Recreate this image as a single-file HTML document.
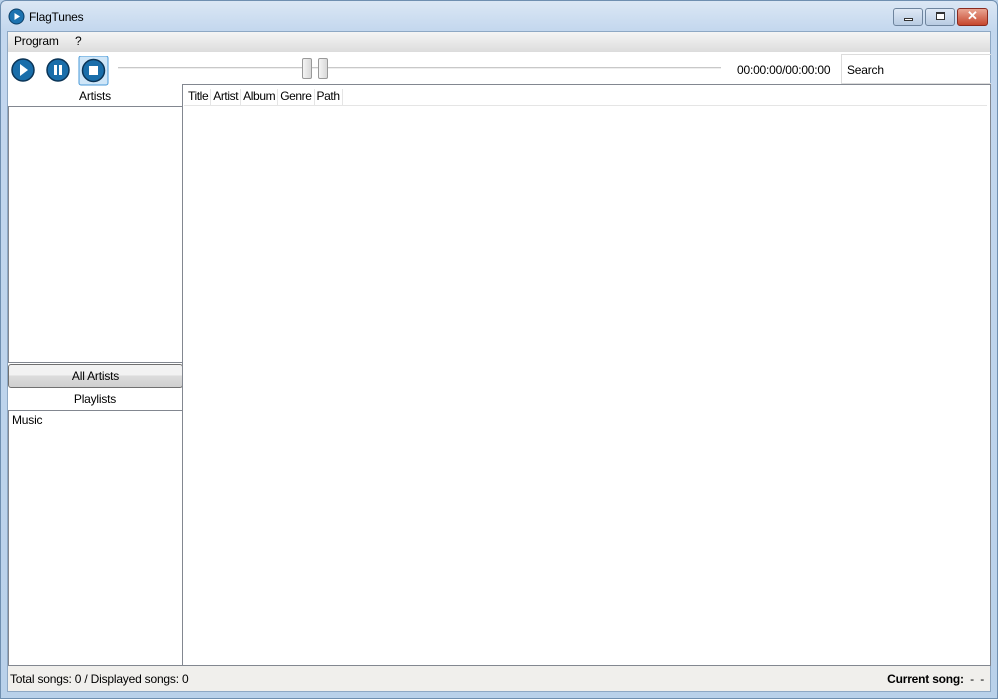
<!DOCTYPE html>
<html><head><style>
*{margin:0;padding:0;box-sizing:border-box}
body{width:998px;height:699px;background:#b9d1ea;font-family:"Liberation Sans",sans-serif;font-size:12px;color:#000;position:relative;overflow:hidden;letter-spacing:-0.2px}
.frame{position:absolute;left:0;top:0;width:998px;height:699px;background:linear-gradient(#dbe7f4,#c3d7ee 30px,#b9d1ea);border:1px solid #6f8fb0;border-radius:6px 6px 0 0}
.abs{position:absolute}
.client{position:absolute;left:7px;top:31px;width:984px;height:661px;background:#fff;border:1px solid #8ea8c4}
.menu{position:absolute;left:0;top:0;width:982px;height:20px;background:linear-gradient(#f5f5f5,#dcdcdc)}
.btn{position:absolute;top:8px;height:18px;border:1px solid #6e849d;border-radius:3px;background:linear-gradient(#dfe9f5,#b8cbe2)}
</style></head><body>
<div class="frame"></div>
<svg class="abs" style="left:8px;top:8px" width="17" height="17"><circle cx="8.5" cy="8.5" r="7.5" fill="#1d73b0" stroke="#0b3e66"/><path d="M6.5 5 L12 8.5 L6.5 12Z" fill="#fff"/></svg>
<div class="abs" style="left:29px;top:10px;font-size:12px">FlagTunes</div>
<div class="btn" style="left:893px;width:30px"><div class="abs" style="left:10px;top:9px;width:9px;height:3px;border:1px solid #333;background:#fff"></div></div>
<div class="btn" style="left:925px;width:30px"><div class="abs" style="left:10px;top:3px;width:9px;height:8px;border:1px solid #333;background:#fff;border-top-width:2px"></div></div>
<div class="btn" style="left:957px;width:31px;border-color:#8a2a1e;background:linear-gradient(#e9a592,#c6462d)"><div class="abs" style="left:9px;top:-1px;color:#fff;font-weight:bold;font-size:13px">✕</div></div>
<div class="client">
<div class="menu"><span class="abs" style="left:6px;top:2px">Program</span><span class="abs" style="left:67px;top:2px">?</span></div>
<svg class="abs" style="left:2px;top:24px" width="100" height="30">
<circle cx="13" cy="14" r="11" fill="#1a6eaa" stroke="#0b3456" stroke-width="1.5"/><path d="M10 8 L18 14 L10 20Z" fill="#fff"/>
<circle cx="48" cy="14" r="11" fill="#1a6eaa" stroke="#0b3456" stroke-width="1.5"/><rect x="44" y="9" width="3" height="10" fill="#fff"/><rect x="49" y="9" width="3" height="10" fill="#fff"/>
<rect x="69" y="0" width="29" height="29" rx="2" fill="#cfe6f8" stroke="#4a9ad8"/>
<circle cx="83.5" cy="14.5" r="11" fill="#1a6eaa" stroke="#0b3456" stroke-width="1.5"/><rect x="79" y="10" width="9" height="9" fill="#fff"/>
</svg>
<div class="abs" style="left:110px;top:35px;width:603px;height:2px;background:#c8c8c8;border-bottom:1px solid #eee"></div>
<div class="abs" style="left:294px;top:26px;width:10px;height:21px;border:1px solid #999;border-radius:2px;background:linear-gradient(90deg,#f4f4f4,#d8d8d8)"></div>
<div class="abs" style="left:310px;top:26px;width:10px;height:21px;border:1px solid #999;border-radius:2px;background:linear-gradient(90deg,#f4f4f4,#d8d8d8)"></div>
<div class="abs" style="left:729px;top:31px">00:00:00/00:00:00</div>
<div class="abs" style="left:833px;top:22px;width:150px;height:30px;border:1px solid #dcdcdc;border-right:none;padding:8px 0 0 5px">Search</div>
<div class="abs" style="left:0;top:52px;width:174px;height:22px;text-align:center;padding-top:5px">Artists</div>
<div class="abs" style="left:0;top:74px;width:175px;height:257px;border:1px solid #828790"></div>
<div class="abs" style="left:0;top:332px;width:175px;height:24px;border:1px solid #707070;border-radius:3px;background:linear-gradient(#f2f2f2 45%,#dcdcdc 50%,#cfcfcf);text-align:center;padding-top:4px">All Artists</div>
<div class="abs" style="left:0;top:356px;width:174px;height:22px;text-align:center;padding-top:4px">Playlists</div>
<div class="abs" style="left:0;top:378px;width:175px;height:256px;border:1px solid #828790;padding:2px 3px">Music</div>
<div class="abs" style="left:174px;top:52px;width:809px;height:582px;border:1px solid #828790"></div>
<div class="abs" style="left:176px;top:54px;width:803px;height:20px;border-bottom:1px solid #e5e5e5"></div>
<div class="abs" style="left:176px;top:54px;height:20px;display:flex;padding-top:3px;letter-spacing:-0.4px">
<span style="padding:0 2px 0 4px;border-right:1px solid #e5e5e5">Title</span><span style="padding:0 2px;border-right:1px solid #e5e5e5">Artist</span><span style="padding:0 2px;border-right:1px solid #e5e5e5">Album</span><span style="padding:0 2px;border-right:1px solid #e5e5e5">Genre</span><span style="padding:0 2px;border-right:1px solid #e5e5e5">Path</span></div>
<div class="abs" style="left:0;top:634px;width:982px;height:25px;background:#f0efec"><span class="abs" style="left:2px;top:6px">Total songs: 0 / Displayed songs: 0</span><span class="abs" style="right:6px;top:6px"><b>Current song:</b>&nbsp; - &nbsp;-</span></div>
</div>
</body></html>
